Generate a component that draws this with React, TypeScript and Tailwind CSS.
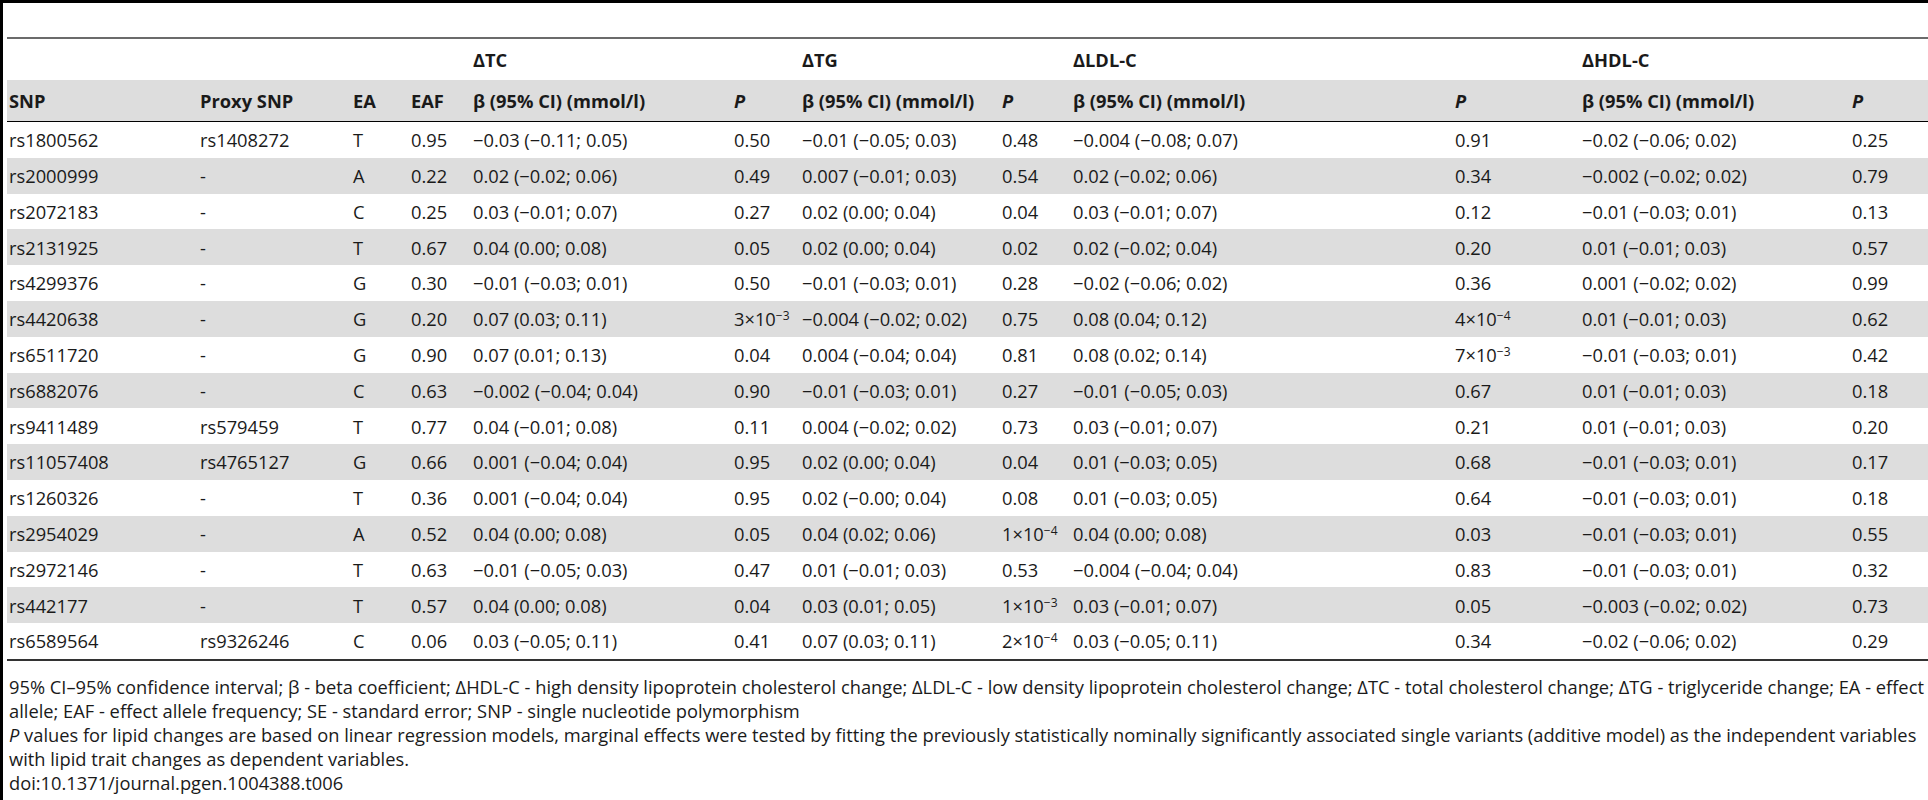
import React from 'react';

type Row = [string, string, string, string, React.ReactNode, React.ReactNode, React.ReactNode, React.ReactNode, React.ReactNode, React.ReactNode, React.ReactNode, React.ReactNode];

const Exp = ({ base, exp }: { base: string; exp: string }) => (
    <span>
        {base}×10<sup className="text-[12px]">{exp}</sup>
    </span>
);

const rows: Row[] = [
    ['rs1800562', 'rs1408272', 'T', '0.95', '−0.03 (−0.11; 0.05)', '0.50', '−0.01 (−0.05; 0.03)', '0.48', '−0.004 (−0.08; 0.07)', '0.91', '−0.02 (−0.06; 0.02)', '0.25'],
    ['rs2000999', '-', 'A', '0.22', '0.02 (−0.02; 0.06)', '0.49', '0.007 (−0.01; 0.03)', '0.54', '0.02 (−0.02; 0.06)', '0.34', '−0.002 (−0.02; 0.02)', '0.79'],
    ['rs2072183', '-', 'C', '0.25', '0.03 (−0.01; 0.07)', '0.27', '0.02 (0.00; 0.04)', '0.04', '0.03 (−0.01; 0.07)', '0.12', '−0.01 (−0.03; 0.01)', '0.13'],
    ['rs2131925', '-', 'T', '0.67', '0.04 (0.00; 0.08)', '0.05', '0.02 (0.00; 0.04)', '0.02', '0.02 (−0.02; 0.04)', '0.20', '0.01 (−0.01; 0.03)', '0.57'],
    ['rs4299376', '-', 'G', '0.30', '−0.01 (−0.03; 0.01)', '0.50', '−0.01 (−0.03; 0.01)', '0.28', '−0.02 (−0.06; 0.02)', '0.36', '0.001 (−0.02; 0.02)', '0.99'],
    ['rs4420638', '-', 'G', '0.20', '0.07 (0.03; 0.11)', <Exp base="3" exp="−3" />, '−0.004 (−0.02; 0.02)', '0.75', '0.08 (0.04; 0.12)', <Exp base="4" exp="−4" />, '0.01 (−0.01; 0.03)', '0.62'],
    ['rs6511720', '-', 'G', '0.90', '0.07 (0.01; 0.13)', '0.04', '0.004 (−0.04; 0.04)', '0.81', '0.08 (0.02; 0.14)', <Exp base="7" exp="−3" />, '−0.01 (−0.03; 0.01)', '0.42'],
    ['rs6882076', '-', 'C', '0.63', '−0.002 (−0.04; 0.04)', '0.90', '−0.01 (−0.03; 0.01)', '0.27', '−0.01 (−0.05; 0.03)', '0.67', '0.01 (−0.01; 0.03)', '0.18'],
    ['rs9411489', 'rs579459', 'T', '0.77', '0.04 (−0.01; 0.08)', '0.11', '0.004 (−0.02; 0.02)', '0.73', '0.03 (−0.01; 0.07)', '0.21', '0.01 (−0.01; 0.03)', '0.20'],
    ['rs11057408', 'rs4765127', 'G', '0.66', '0.001 (−0.04; 0.04)', '0.95', '0.02 (0.00; 0.04)', '0.04', '0.01 (−0.03; 0.05)', '0.68', '−0.01 (−0.03; 0.01)', '0.17'],
    ['rs1260326', '-', 'T', '0.36', '0.001 (−0.04; 0.04)', '0.95', '0.02 (−0.00; 0.04)', '0.08', '0.01 (−0.03; 0.05)', '0.64', '−0.01 (−0.03; 0.01)', '0.18'],
    ['rs2954029', '-', 'A', '0.52', '0.04 (0.00; 0.08)', '0.05', '0.04 (0.02; 0.06)', <Exp base="1" exp="−4" />, '0.04 (0.00; 0.08)', '0.03', '−0.01 (−0.03; 0.01)', '0.55'],
    ['rs2972146', '-', 'T', '0.63', '−0.01 (−0.05; 0.03)', '0.47', '0.01 (−0.01; 0.03)', '0.53', '−0.004 (−0.04; 0.04)', '0.83', '−0.01 (−0.03; 0.01)', '0.32'],
    ['rs442177', '-', 'T', '0.57', '0.04 (0.00; 0.08)', '0.04', '0.03 (0.01; 0.05)', <Exp base="1" exp="−3" />, '0.03 (−0.01; 0.07)', '0.05', '−0.003 (−0.02; 0.02)', '0.73'],
    ['rs6589564', 'rs9326246', 'C', '0.06', '0.03 (−0.05; 0.11)', '0.41', '0.07 (0.03; 0.11)', <Exp base="2" exp="−4" />, '0.03 (−0.05; 0.11)', '0.34', '−0.02 (−0.06; 0.02)', '0.29'],
];

// column template shared by every row
const cols = 'grid grid-cols-[191px_153px_58px_62px_261px_68px_200px_71px_382px_127px_270px_78px] items-center';

const groups = ['ΔTC', 'ΔTG', 'ΔLDL-C', 'ΔHDL-C'];

export default function App() {
    return (
        <div className="h-[800px] w-[1928px] overflow-hidden bg-white border-t-[3px] border-l-[3px] border-black font-['Open_Sans',sans-serif] text-[18.3px] text-[#1a1a1a]">
            <div className="pl-[4px]">
                {/* Title space and rule */}
                <div className="h-[34px]" />
                <div className="h-[2px] bg-[#6b6b6b]" />

                {/* Group header */}
                <div className={`${cols} h-[41px] font-bold`}>
                    <div className="col-span-4" />
                    {groups.map((g) => (
                        <div key={g} className="col-span-2 pl-[2px]">{g}</div>
                    ))}
                </div>

                {/* Column header */}
                <div className={`${cols} h-[42px] bg-[#dddddd] font-bold border-b border-black`}>
                    <div className="pl-[2px]">SNP</div>
                    <div className="pl-[2px]">Proxy SNP</div>
                    <div className="pl-[2px]">EA</div>
                    <div className="pl-[2px]">EAF</div>
                    {groups.map((g) => (
                        <React.Fragment key={g}>
                            <div className="pl-[2px] whitespace-nowrap">β (95% CI) (mmol/l)</div>
                            <div className="pl-[2px] italic">P</div>
                        </React.Fragment>
                    ))}
                </div>

                {/* Body */}
                {rows.map((r, i) => (
                    <div key={i} className={`${cols} h-[35.8px] ${i % 2 === 1 ? 'bg-[#dddddd]' : ''}`}>
                        {r.map((c, j) => (
                            <div key={j} className="pl-[2px] whitespace-nowrap">{c}</div>
                        ))}
                    </div>
                ))}
                <div className="h-[2px] bg-[#333333]" />

                {/* Footnotes */}
                <div className="mt-[14px] pl-[2px] leading-[24px] whitespace-nowrap">
                    <p>95% CI–95% confidence interval; β - beta coefficient; ΔHDL-C - high density lipoprotein cholesterol change; ΔLDL-C - low density lipoprotein cholesterol change; ΔTC - total cholesterol change; ΔTG - triglyceride change; EA - effect</p>
                    <p>allele; EAF - effect allele frequency; SE - standard error; SNP - single nucleotide polymorphism</p>
                    <p><span className="italic">P</span> values for lipid changes are based on linear regression models, marginal effects were tested by fitting the previously statistically nominally significantly associated single variants (additive model) as the independent variables</p>
                    <p>with lipid trait changes as dependent variables.</p>
                    <p>doi:10.1371/journal.pgen.1004388.t006</p>
                </div>
            </div>
        </div>
    );
}
